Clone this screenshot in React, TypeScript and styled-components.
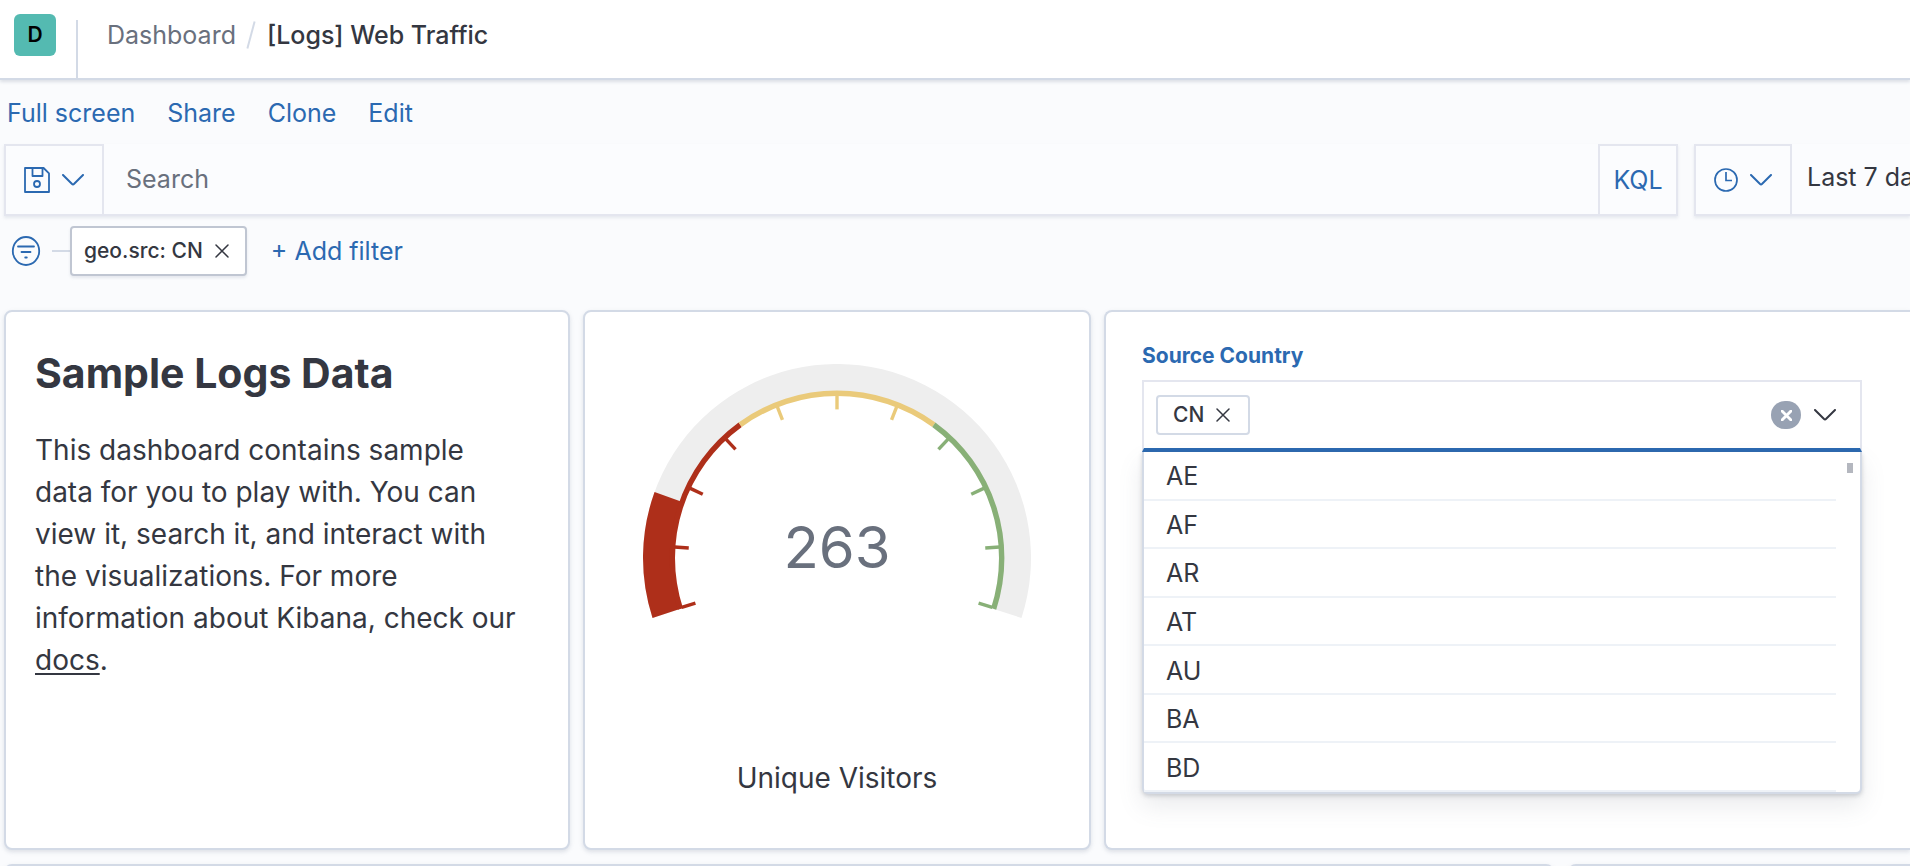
import React, { useState } from 'react';
import styled, { createGlobalStyle } from 'styled-components';

const color = {
  page: '#fafbfd',
  panel: '#ffffff',
  field: '#fbfcfe',
  link: '#2b69b1',
  text: '#343741',
  subdued: '#69707d',
  border: '#d3dae6',
  fieldBorder: '#e4e6ef',
  rule: '#eef2f7',
};

const GlobalStyle = createGlobalStyle`
  * { box-sizing: border-box; }
  body {
    margin: 0;
    background: ${color.page};
    color: ${color.text};
    font-family: Inter, "Liberation Sans", sans-serif;
    font-size: 25px;
    line-height: 36px;
    overflow: hidden;
  }
  button, input { font: inherit; color: inherit; }
  button { background: none; border: 0; padding: 0; cursor: pointer; }
  svg { display: block; flex: none; }
`;

const Header = styled.header`
  display: flex;
  align-items: flex-start;
  height: 80px;
  padding-left: 14px;
  background: ${color.panel};
  border-bottom: 2px solid ${color.border};
  box-shadow: 0 2px 3px rgba(152, 162, 179, 0.3);
`;

const SpaceBadge = styled.button`
  width: 42px;
  height: 42px;
  margin-top: 14px;
  border-radius: 6px;
  background: #54bab1;
  color: #000;
  font-size: 21px;
  font-weight: 600;
`;

const HeaderDivider = styled.span`
  align-self: stretch;
  width: 2px;
  margin: 20px 29px 0 20px;
  background: ${color.border};
`;

const Breadcrumbs = styled.nav`
  display: flex;
  align-items: center;
  padding-top: 17px;
`;

const Crumb = styled.a`
  color: ${color.subdued};
  text-decoration: none;
`;

const CrumbSlash = styled.span`
  width: 2px;
  height: 28px;
  margin: 0 15px 0 14px;
  background: ${color.border};
  transform: rotate(15deg);
`;

const CurrentCrumb = styled.span`
  font-weight: 500;
`;

const TopMenu = styled.nav`
  display: flex;
  gap: 32px;
  padding: 15px 7px 13px;
`;

const LinkButton = styled.button`
  color: ${color.link};
`;

const QueryRow = styled.div`
  display: flex;
  gap: 16px;
  padding-left: 4px;
`;

const FieldGroup = styled.div<{ $fixed?: boolean }>`
  display: flex;
  flex: ${(p) => (p.$fixed ? '0 0 216px' : '1 1 0')};
  min-width: 0;
  height: 72px;
  overflow: hidden;
  background: ${color.field};
  border-bottom: 2px solid ${color.fieldBorder};
  box-shadow: 0 2px 3px rgba(152, 162, 179, 0.2);
`;

const FieldButton = styled.button<{ $width: number }>`
  display: flex;
  flex: 0 0 ${(p) => p.$width}px;
  align-items: center;
  justify-content: center;
  gap: 12px;
  border: 2px solid ${color.fieldBorder};
  border-bottom: 0;
  color: ${color.link};
`;

const SearchInput = styled.input`
  flex: 1;
  min-width: 0;
  padding: 0 22px;
  border: 0;
  outline: 0;
  background: transparent;
  &::placeholder { color: ${color.subdued}; opacity: 1; }
`;

const DateRange = styled.button`
  flex: none;
  padding: 0 0 4px 15px;
  white-space: nowrap;
`;

const FilterRow = styled.div`
  display: flex;
  align-items: center;
  padding: 10px 0 34px 11px;
`;

const FilterIconButton = styled.button`
  color: ${color.link};
`;

const Connector = styled.span`
  width: 18px;
  height: 2px;
  margin-left: 11px;
  background: ${color.border};
`;

const FilterPill = styled.div`
  display: flex;
  align-items: center;
  gap: 12px;
  height: 50px;
  margin-right: 24px;
  padding: 0 16px 0 12px;
  background: ${color.panel};
  border: 2px solid #c0c6d2;
  border-radius: 4px;
  box-shadow: 0 2px 3px rgba(152, 162, 179, 0.2);
  font-size: 21px;
  font-weight: 500;
`;

const Dashboard = styled.main`
  display: grid;
  gap: 14px;
  padding-left: 4px;
`;

const TopPanels = styled.div`
  display: grid;
  grid-template-columns: 566fr 508fr 806fr;
  gap: 13px;
`;

const BottomPanels = styled.div`
  display: grid;
  grid-template-columns: 1550fr 342fr;
  gap: 14px;
`;

const Panel = styled.section<{ $bleed?: boolean }>`
  min-width: 0;
  min-height: 540px;
  background: ${color.panel};
  border: 2px solid ${color.border};
  border-radius: 8px;
  box-shadow: 0 2px 4px rgba(152, 162, 179, 0.3);
  ${(p) => p.$bleed && 'border-right: 0; border-top-right-radius: 0; border-bottom-right-radius: 0;'}
`;

const MarkdownPanel = styled(Panel)`
  padding: 36px 42px 36px 29px;
  font-size: 28px;
  line-height: 42px;
`;

const Heading = styled.h1`
  margin: 0 0 31px;
  font-size: 41px;
  line-height: 50px;
  font-weight: 700;
`;

const Paragraph = styled.p`
  margin: 0;
`;

const DocsLink = styled.a`
  color: inherit;
  text-underline-offset: 3px;
  text-decoration-thickness: 2px;
`;

const GaugePanel = styled(Panel)`
  display: flex;
  flex-direction: column;
  align-items: center;
  gap: 140px;
  padding-top: 52px;
`;

const GaugeLabel = styled.div`
  font-size: 28px;
`;

const ControlPanel = styled(Panel)`
  padding: 28px 48px 0 36px;
`;

const ControlLabel = styled.label`
  display: block;
  margin-bottom: 8px;
  color: ${color.link};
  font-size: 21px;
  line-height: 32px;
  font-weight: 700;
`;

const ComboBox = styled.div`
  position: relative;
`;

const ComboField = styled.div`
  display: flex;
  align-items: center;
  height: 72px;
  padding: 0 24px 0 12px;
  background: ${color.panel};
  border: 2px solid ${color.fieldBorder};
  border-bottom: 4px solid ${color.link};
`;

const ComboPill = styled.span`
  display: flex;
  align-items: center;
  gap: 12px;
  height: 40px;
  padding: 0 18px 0 15px;
  border: 2px solid ${color.border};
  border-radius: 4px;
  font-size: 21px;
  font-weight: 500;
`;

const ComboInput = styled.input`
  flex: 1;
  min-width: 0;
  height: 40px;
  border: 0;
  outline: 0;
  background: transparent;
`;

const ClearButton = styled.button`
  display: flex;
  align-items: center;
  justify-content: center;
  width: 30px;
  height: 28px;
  margin-right: 13px;
  border-radius: 14px;
  background: #98a2b3;
  color: #fff;
`;

const Menu = styled.div`
  position: absolute;
  top: 100%;
  left: 0;
  right: 0;
  display: flex;
  align-items: flex-start;
  height: 342px;
  background: ${color.panel};
  border: 2px solid ${color.border};
  border-top: 0;
  border-radius: 0 0 6px 6px;
  box-shadow: 0 2px 4px rgba(105, 112, 125, 0.3), 0 12px 24px rgba(105, 112, 125, 0.14);
`;

const OptionList = styled.ul`
  display: flex;
  flex: 1;
  flex-direction: column;
  align-self: stretch;
  margin: 0;
  padding: 0;
  list-style: none;
`;

const Option = styled.li`
  display: flex;
  flex: 1;
  align-items: center;
  padding: 2px 0 0 22px;
  border-bottom: 2px solid ${color.rule};
  cursor: pointer;
`;

const ScrollThumb = styled.span`
  width: 6px;
  height: 10px;
  margin: 11px 7px 0 11px;
  background: #b4b7bf;
`;

const Cross = ({ size = 14, stroke = 2 }: { size?: number; stroke?: number }) => (
  <svg width={size} height={size} viewBox="0 0 14 14" fill="none" stroke="currentColor" strokeWidth={stroke} strokeLinecap="round" aria-hidden="true">
    <path d="M1 1l12 12M13 1L1 13" />
  </svg>
);

const Chevron = () => (
  <svg width="22" height="12" viewBox="0 0 22 12" fill="none" stroke="currentColor" strokeWidth="2" strokeLinecap="round" aria-hidden="true">
    <path d="M1 1l8.8 8.8q1.2 1.1 2.4 0L21 1" />
  </svg>
);

const SaveIcon = () => (
  <svg width="26" height="26" viewBox="0 0 26 26" fill="none" stroke="currentColor" strokeWidth="1.8" strokeLinejoin="round" aria-hidden="true">
    <path d="M1 1h18.6L25 6.4V25H1zM8.5 1v8h10V1" />
    <circle cx="13" cy="17" r="3" />
  </svg>
);

const ClockIcon = () => (
  <svg width="24" height="24" viewBox="0 0 24 24" fill="none" stroke="currentColor" strokeWidth="1.7" aria-hidden="true">
    <circle cx="12" cy="12" r="11" />
    <path d="M12 4v8.5h6" />
  </svg>
);

const FilterIcon = () => (
  <svg width="30" height="30" viewBox="0 0 30 30" fill="none" stroke="currentColor" strokeWidth="1.8" strokeLinecap="round" aria-hidden="true">
    <ellipse cx="15" cy="15" rx="13.2" ry="14" />
    <path d="M7 10.5h16M10.5 16h9M14.2 21.5h1.6" />
  </svg>
);

const SWEEP = 216;
const CENTER = 194;
const MAX = 1500;

const polar = (radius: number, fraction: number) => {
  const angle = ((162 + fraction * SWEEP) * Math.PI) / 180;
  return `${(CENTER + radius * Math.cos(angle)).toFixed(2)} ${(CENTER + radius * Math.sin(angle)).toFixed(2)}`;
};

const band = (inner: number, outer: number, from: number, to: number) => {
  const large = (to - from) * SWEEP > 180 ? 1 : 0;
  return `M${polar(outer, from)}A${outer} ${outer} 0 ${large} 1 ${polar(outer, to)}L${polar(inner, to)}A${inner} ${inner} 0 ${large} 0 ${polar(inner, from)}Z`;
};

const ranges = ['#ae2f1a', '#eaca7a', '#88b077'];

const GaugeValue = styled.text`
  fill: ${color.subdued};
  font-size: 58px;
  text-anchor: middle;
`;

const Gauge = ({ value }: { value: number }) => (
  <svg width="388" height="256" viewBox="0 0 388 256" role="img" aria-label={`${value} unique visitors`}>
    <path d={band(164, 194, 0, 1)} fill="#eeeeee" />
    <path d={band(163, 194, 0, value / MAX)} fill={ranges[0]} />
    {ranges.map((fill, i) => (
      <path key={fill} d={band(162, 167.4, i / 3, (i + 1) / 3)} fill={fill} />
    ))}
    {Array.from({ length: 11 }, (_, i) => (
      <path
        key={i}
        d={`M${polar(163, 0.0015 + (i / 10) * 0.997)}L${polar(148.6, 0.0015 + (i / 10) * 0.997)}`}
        stroke={ranges[Math.min(2, Math.floor((i / 10) * 3))]}
        strokeWidth="3.4"
      />
    ))}
    <GaugeValue x={CENTER} y="204">{value}</GaugeValue>
  </svg>
);

const countries = ['AE', 'AF', 'AR', 'AT', 'AU', 'BA', 'BD'];

export default function App() {
  const [query, setQuery] = useState('');
  const [country, setCountry] = useState('');

  return (
    <>
      <GlobalStyle />
      <Header>
        <SpaceBadge aria-label="Default space">D</SpaceBadge>
        <HeaderDivider />
        <Breadcrumbs aria-label="Breadcrumbs">
          <Crumb href="#dashboards">Dashboard</Crumb>
          <CrumbSlash />
          <CurrentCrumb aria-current="page">[Logs] Web Traffic</CurrentCrumb>
        </Breadcrumbs>
      </Header>

      <TopMenu aria-label="Dashboard actions">
        {['Full screen', 'Share', 'Clone', 'Edit'].map((item) => (
          <LinkButton key={item}>{item}</LinkButton>
        ))}
      </TopMenu>

      <QueryRow>
        <FieldGroup>
          <FieldButton $width={100} aria-label="Saved queries">
            <SaveIcon />
            <Chevron />
          </FieldButton>
          <SearchInput
            aria-label="Search"
            placeholder="Search"
            value={query}
            onChange={(e) => setQuery(e.target.value)}
          />
          <FieldButton $width={80}>KQL</FieldButton>
        </FieldGroup>
        <FieldGroup $fixed>
          <FieldButton $width={98} aria-label="Quick time ranges">
            <ClockIcon />
            <Chevron />
          </FieldButton>
          <DateRange>Last 7 days</DateRange>
        </FieldGroup>
      </QueryRow>

      <FilterRow>
        <FilterIconButton aria-label="Filter options">
          <FilterIcon />
        </FilterIconButton>
        <Connector />
        <FilterPill>
          geo.src: CN
          <button aria-label="Remove filter geo.src: CN">
            <Cross stroke={1.5} />
          </button>
        </FilterPill>
        <LinkButton>+ Add filter</LinkButton>
      </FilterRow>

      <Dashboard>
        <TopPanels>
          <MarkdownPanel>
            <Heading>Sample Logs Data</Heading>
            <Paragraph>
              This dashboard contains sample data for you to play with. You can view it, search it, and interact with
              the visualizations. For more information about Kibana, check our <DocsLink href="#docs">docs</DocsLink>.
            </Paragraph>
          </MarkdownPanel>

          <GaugePanel>
            <Gauge value={263} />
            <GaugeLabel>Unique Visitors</GaugeLabel>
          </GaugePanel>

          <ControlPanel $bleed>
            <ControlLabel htmlFor="source-country">Source Country</ControlLabel>
            <ComboBox>
              <ComboField>
                <ComboPill>
                  CN
                  <button aria-label="Remove CN">
                    <Cross stroke={1.5} />
                  </button>
                </ComboPill>
                <ComboInput
                  id="source-country"
                  role="combobox"
                  aria-expanded="true"
                  aria-controls="country-options"
                  value={country}
                  onChange={(e) => setCountry(e.target.value)}
                />
                <ClearButton aria-label="Clear selection">
                  <Cross size={11} stroke={3.6} />
                </ClearButton>
                <button aria-label="Close list of options">
                  <Chevron />
                </button>
              </ComboField>
              <Menu>
                <OptionList id="country-options" role="listbox" aria-label="Source Country">
                  {countries.map((code) => (
                    <Option key={code} role="option" aria-selected="false">
                      {code}
                    </Option>
                  ))}
                </OptionList>
                <ScrollThumb />
              </Menu>
            </ComboBox>
          </ControlPanel>
        </TopPanels>

        <BottomPanels>
          <Panel />
          <Panel $bleed />
        </BottomPanels>
      </Dashboard>
    </>
  );
}
